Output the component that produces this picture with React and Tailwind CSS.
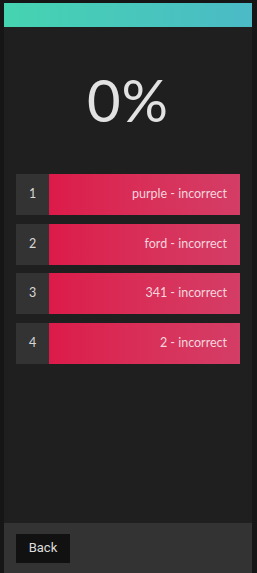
export default function App() {
  const rows = [
    { n: 1, t: "purple - incorrect" },
    { n: 2, t: "ford - incorrect" },
    { n: 3, t: "341 - incorrect" },
    { n: 4, t: "2 - incorrect" },
  ];
  return (
    <div className="h-[573px] w-[257px] bg-[#161616] pl-[4px] pr-[5px] pt-[3px] flex flex-col overflow-hidden">
      <div className="h-[24px] shrink-0 bg-gradient-to-r from-[#45d4b0] to-[#4bbac6]" />
      <div className="flex-1 bg-[#1f1f1f] flex flex-col">
        <div
          className="h-[147px] flex items-center justify-center text-[#e2e2e2] text-[58px] leading-none pb-[1px] tracking-[1px]"
          style={{ fontFamily: "Lato, 'Open Sans', sans-serif" }}
        >
          0%
        </div>
        <div className="flex flex-col gap-[8.5px] px-[12px]">
          {rows.map((r) => (
            <div key={r.n} className="flex h-[41px]">
              <div
                className="w-[33px] bg-[#333333] flex items-center justify-center text-[12.5px] text-[#d8d8d8]"
                style={{ fontFamily: "Lato, sans-serif" }}
              >
                {r.n}
              </div>
              <div
                className="flex-1 bg-gradient-to-r from-[#dc1a4a] to-[#d43d66] flex items-center justify-end pr-[13px] text-[12.5px] text-[#f5d5dd]"
                style={{ fontFamily: "Lato, sans-serif" }}
              >
                {r.t}
              </div>
            </div>
          ))}
        </div>
      </div>
      <div className="h-[50px] shrink-0 bg-[#333333] flex items-center px-[12px]">
        <div
          className="w-[54px] h-[29px] bg-[#111111] flex items-center justify-center text-[13px] text-[#dddddd]"
          style={{ fontFamily: "Roboto, sans-serif" }}
        >
          Back
        </div>
      </div>
    </div>
  );
}
